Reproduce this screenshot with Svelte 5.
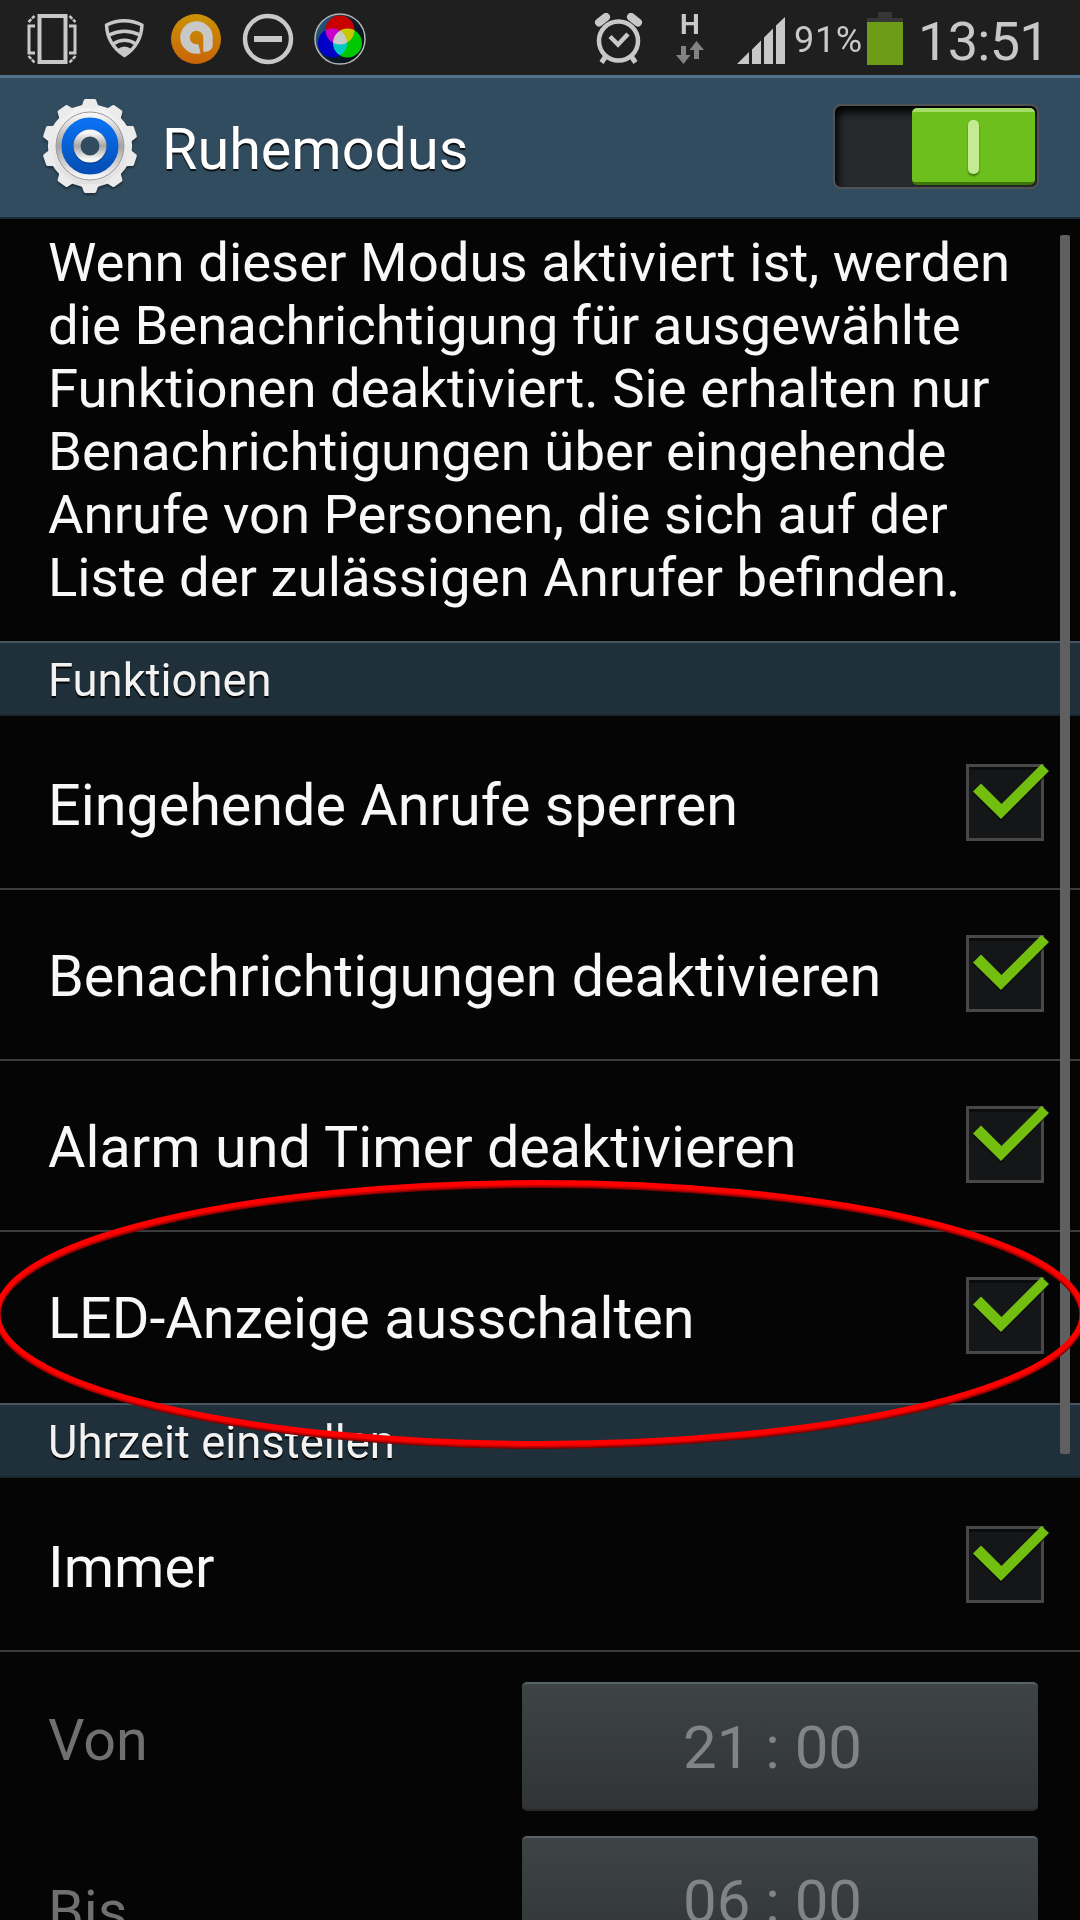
<script lang="ts">
    interface Option {
        label: string
        checked: boolean
    }

    let enabled = $state(true)

    let functions: Option[] = $state([
        { label: "Eingehende Anrufe sperren", checked: true },
        { label: "Benachrichtigungen deaktivieren", checked: true },
        { label: "Alarm und Timer deaktivieren", checked: true },
        { label: "LED-Anzeige ausschalten", checked: true },
    ])

    let schedule: Option[] = $state([{ label: "Immer", checked: true }])

    const times = [
        { label: "Von", value: "21 : 00" },
        { label: "Bis", value: "06 : 00" },
    ]

    const intro = [
        "Wenn dieser Modus aktiviert ist, werden",
        "die Benachrichtigung für ausgewählte",
        "Funktionen deaktiviert. Sie erhalten nur",
        "Benachrichtigungen über eingehende",
        "Anrufe von Personen, die sich auf der",
        "Liste der zulässigen Anrufer befinden.",
    ]

    const teeth = Array.from({ length: 10 }, (_, i) => i * 36)
</script>

{#snippet row(option: Option)}
    <button class="row" type="button" onclick={() => (option.checked = !option.checked)}>
        <span class="label">{option.label}</span>
        <svg class="check" width="84" height="82" viewBox="0 0 84 82">
            <rect x="1.5" y="1.5" width="75" height="74" fill="#141618" stroke="#484848" stroke-width="3" />
            <rect x="3" y="3" width="72" height="3" fill="#0b0c0d" />
            {#if option.checked}
                <path d="M7 27.5 L15 19.5 L35.5 40 L75.5 0 L83 7 L35 55 Z" fill="#050505" opacity=".6" transform="translate(0 2)" />
                <path d="M7 27.5 L15 19.5 L35.5 40 L75.5 0 L83 7 L35 55 Z" fill="#73bf10" />
            {/if}
        </svg>
    </button>
{/snippet}

<div class="phone">
    <div class="status">
        <div class="notifications">
            <svg width="52" height="52" viewBox="0 0 52 52" fill="none" stroke="#c8c8c8">
                <rect x="13.5" y="3" width="26" height="46" stroke-width="4" />
                <path d="M9 13 H3 V40 H9 M43 13 H49 V40 H43" stroke-width="3" />
                <path d="M2.5 9 L8.5 3 M43.5 3 L49.5 9 M2.5 43 L8.5 49.5 M43.5 49.5 L49.5 43" stroke-width="2.5" stroke-dasharray="4 1" />
            </svg>
            <svg width="52" height="52" viewBox="0 0 52 52" fill="none" stroke="#c8c8c8" stroke-width="3.5">
                <path d="M8.5 12 Q26 3.5 44 12 Q43 32 26.500 42.500 Q9.500 32 8.500 12 Z" stroke-linejoin="round" />
                <path d="M11 22 Q26.5 14.5 42 22 M15 31 Q26.5 23.5 38 31" />
                <path d="M20 37 Q26.5 32 33 37 L26.5 42 Z" fill="#c8c8c8" stroke-width="2" />
            </svg>
            <svg width="52" height="52" viewBox="0 0 52 52">
                <defs>
                    <linearGradient id="amber" x2="0" y2="1">
                        <stop offset="0" stop-color="#c99405" />
                        <stop offset="1" stop-color="#c96408" />
                    </linearGradient>
                </defs>
                <circle cx="26" cy="26" r="25" fill="url(#amber)" />
                <path d="M29.5 35.6 A11.5 11.5 0 1 1 38 24.5" fill="none" stroke="#c8c8c8" stroke-width="9.5" />
                <path d="M33.3 24 H42.7 V33 Q42 38.500 33.3 39 Z" fill="#c8c8c8" />
            </svg>
            <svg width="52" height="52" viewBox="0 0 52 52">
                <circle cx="26" cy="26" r="23" fill="none" stroke="#c8c8c8" stroke-width="4.500" />
                <rect x="12" y="23" width="28" height="6" fill="#c8c8c8" />
            </svg>
            <svg width="52" height="52" viewBox="0 0 52 52">
                <defs>
                    <linearGradient id="lens" x2="1" y2=".6">
                        <stop offset="0" stop-color="#2f6f9f" />
                        <stop offset=".6" stop-color="#0c1c2c" />
                        <stop offset="1" stop-color="#08101a" />
                    </linearGradient>
                </defs>
                <circle cx="26" cy="26" r="25" fill="url(#lens)" stroke="#b4b4b4" stroke-width="1.500" />
                <g class="rgb">
                    <circle cx="26" cy="17" r="14.5" fill="#c80000" />
                    <circle cx="18.5" cy="30" r="14.5" fill="#0000c8" />
                    <circle cx="33.5" cy="30" r="14.5" fill="#00c800" />
                </g>
            </svg>
        </div>

        <div class="system">
            <svg class="alarm" width="52" height="52" viewBox="0 0 52 52" fill="none" stroke="#c8c8c8">
                <circle cx="26.5" cy="28" r="19.5" stroke-width="4.5" />
                <path d="M18 23.5 L26 31.5 L36 21" stroke-width="4.5" />
                <path d="M14 43 L9.500 49.500 M39 43 L43.500 49.500" stroke-width="5" />
                <path d="M7 9.500 L14 4 M39 4 L46 9.500" stroke-width="8" stroke-linecap="round" />
            </svg>
            <div class="network">
                <span>H</span>
                <svg width="28" height="24" viewBox="0 0 28 24" fill="#828282">
                    <path d="M5 5 H10 V14 H14.5 L7.5 23 L0 14 H5 Z M20.5 0 L28 9 H23 V18 H18 V9 H13.5 Z" />
                </svg>
            </div>
            <svg class="signal" width="48" height="48" viewBox="0 0 48 48" fill="#c8c8c8">
                <path d="M0 47 L12 35 V47 Z M15 47 V32.5 L24 23.5 V47 Z M27 47 V20.5 L36 11.5 V47 Z M39 47 V8.5 L48 0 V47 Z" />
            </svg>
            <span class="percent">91%</span>
            <svg class="battery" width="36" height="53" viewBox="0 0 36 53">
                <path d="M11 0 H25 V6 H36 V12 H0 V6 H11 Z" fill="#373737" />
                <rect y="10" width="36" height="43" fill="#6d9c16" />
            </svg>
            <span class="clock">13:51</span>
        </div>
    </div>

    <header>
        <svg width="96" height="98" viewBox="-48 -48 96 98">
            <defs>
                <linearGradient id="steel" gradientUnits="userSpaceOnUse" x1="0" y1="-47" x2="0" y2="47">
                    <stop offset="0" stop-color="#f4f4f4" />
                    <stop offset="1" stop-color="#dedede" />
                </linearGradient>
                <linearGradient id="blue" x2="0" y2="1">
                    <stop offset="0" stop-color="#0a70f0" />
                    <stop offset="1" stop-color="#0450b8" />
                </linearGradient>
                <linearGradient id="rim" x2="0" y2="1">
                    <stop offset="0" stop-color="#f6f6f6" />
                    <stop offset=".5" stop-color="#a4a4a4" />
                    <stop offset="1" stop-color="#f6f6f6" />
                </linearGradient>
            </defs>
            <g class="gear" transform="scale(1.015 1)">
                <circle r="37" fill="none" stroke="url(#steel)" stroke-width="9" />
                {#each teeth as angle}
                    <path d="M-12 -38 Q-8 -39 -7.5 -42 L-6 -46 Q-5.5 -47 -4.5 -47 H4.5 Q5.5 -47 6 -46 L7.5 -42 Q8 -39 12 -38 Z" fill="#ebebeb" transform="rotate({angle})" />
                {/each}
            </g>
            <circle r="31" fill="none" stroke="url(#rim)" stroke-width="6" />
            <circle r="34" fill="none" stroke="#9a9a9a" stroke-width="1" />
            <circle r="22.500" fill="none" stroke="url(#blue)" stroke-width="12" />
            <circle cy="1.500" r="14.500" fill="none" stroke="#043a80" stroke-width="4" opacity=".6" />
            <circle r="13" fill="none" stroke="url(#rim)" stroke-width="7" />
        </svg>
        <h1>Ruhemodus</h1>
        <button class="switch" class:on={enabled} type="button" aria-label="Ruhemodus" onclick={() => (enabled = !enabled)}>
            <span class="thumb"><i></i></span>
        </button>
    </header>

    <main>
        <p>
            {#each intro as line}
                <span>{line}</span>
            {/each}
        </p>

        <h2>Funktionen</h2>
        <div class="rows">
            {#each functions as option}
                {@render row(option)}
            {/each}
        </div>

        <h2>Uhrzeit einstellen</h2>
        <div class="rows always">
            {#each schedule as option}
                {@render row(option)}
            {/each}
        </div>

        <div class="times">
            {#each times as time}
                <div class="time">
                    <span>{time.label}</span>
                    <button type="button" disabled>{time.value}</button>
                </div>
            {/each}
        </div>
    </main>

    <div class="scrollbar"></div>

    <!-- marker round the LED option -->
    <svg class="marker" width="1080" height="280" viewBox="0 1174 1080 280" fill="none">
        <ellipse cx="540" cy="1315.5" rx="542.5" ry="130.5" stroke="#7c0000" stroke-width="6" />
        <ellipse cx="540" cy="1314.3" rx="542.5" ry="130.5" stroke="#c00000" stroke-width="6" />
        <ellipse cx="540" cy="1313" rx="542.5" ry="130.5" stroke="#ff0000" stroke-width="5" />
    </svg>
</div>

<style>
    :global(body) {
        margin: 0;
        background-color: #050505;
    }

    .phone, .phone * {
        box-sizing: border-box;
    }

    .phone {
        position: relative;
        width: 1080px;
        height: 1920px;
        overflow: hidden;
        background-color: #050505;
        color: #f8f8f8;
        font-family: Roboto, "Liberation Sans", sans-serif;
        font-size: 57.5px;
    }

    svg {
        display: block;
        flex: none;
    }

    button {
        margin: 0;
        padding: 0;
        border: 0;
        background: none;
        color: inherit;
        font: inherit;
    }

    .status {
        display: flex;
        justify-content: space-between;
        height: 75px;
        padding: 0 36px 0 26px;
        background-color: #1f1f1f;
        color: #c8c8c8;
    }

    .notifications {
        display: flex;
        gap: 20px;
        padding-top: 13px;
    }

    .rgb {
        isolation: isolate;

        & circle {
            mix-blend-mode: screen;
        }
    }

    .system {
        display: flex;
        width: 452px;
        height: 75px;
        white-space: nowrap;
    }

    .alarm {
        margin-top: 13px;
    }

    .network {
        flex: none;
        width: 28px;
        margin: 13px 0 0 32px;
        text-align: center;

        & span {
            display: block;
            height: 28px;
            font-size: 28px;
            font-weight: 700;
            line-height: 24px;
        }
    }

    .signal {
        margin: 17px 0 0 33px;
    }

    .percent {
        flex: none;
        width: 71px;
        margin-left: 9px;
        font-size: 36px;
        letter-spacing: 0.7px;
        line-height: 80px;
    }

    .battery {
        margin: 12px 0 0 2px;
    }

    .clock {
        flex: none;
        margin-left: 15px;
        font-size: 54px;
        letter-spacing: -0.7px;
        line-height: 84px;
    }

    header {
        display: flex;
        align-items: flex-start;
        height: 144px;
        padding: 0 42px;
        border-top: 3px solid #51718a;
        border-bottom: 2px solid #1b2c38;
        background-color: #314c5f;

        & svg {
            margin-top: 20px;
        }
    }

    .gear {
        filter: drop-shadow(0 2px 1px #0006);
    }

    h1 {
        flex: 1;
        margin: 0 0 0 24px;
        color: #fff;
        font-size: 57.5px;
        font-weight: 400;
        line-height: 143px;
        text-shadow: 0 2px 1px #000c;
    }

    .switch {
        display: flex;
        width: 206px;
        height: 85px;
        margin: 26px -1px 0 0;
        padding: 2px;
        border: 2px solid #505355;
        border-radius: 8px;
        background-color: #272a2d;
        box-shadow: inset 3px 6px 8px #000;

        &.on {
            justify-content: flex-end;
        }
    }

    .thumb {
        display: flex;
        align-items: center;
        justify-content: center;
        width: 123px;
        height: 77px;
        border-top: 4px solid #a4de68;
        border-bottom: 3px solid #3d7508;
        border-radius: 5px;
        background-color: #6cbf1c;

        & i {
            width: 11px;
            height: 54px;
            border-radius: 5px;
            background-color: #c4eb92;
            box-shadow: 0 2px 2px #3a7408;
        }
    }

    p {
        height: 422px;
        margin: 0;
        padding: 12px 0 0 48px;
        font-size: 54.5px;
        white-space: nowrap;

        & span {
            display: block;
            line-height: 63px;
        }
    }

    h2 {
        height: 75px;
        margin: 0;
        padding-left: 48px;
        border-top: 2px solid #47555f;
        border-bottom: 2px solid #1a262e;
        background-color: #20303b;
        color: #f2f2f2;
        font-size: 45.4px;
        font-weight: 400;
        line-height: 75px;
        text-shadow: 0 2px 1px #000;
    }

    .rows {
        padding-top: 3px;
    }

    .row {
        display: flex;
        justify-content: space-between;
        width: 100%;
        height: 171px;
        padding: 45px 30px 0 48px;
        border-bottom: 2px solid #3c3c3c;
        text-align: left;
        white-space: nowrap;

        &:last-child {
            border-bottom: 0;
        }

        .always &:last-child {
            border-bottom: 2px solid #3c3c3c;
        }
    }

    .label {
        line-height: 83px;
    }

    .times {
        display: flex;
        flex-direction: column;
        gap: 25px;
        padding: 30px 42px 0 48px;
        color: #707070;
    }

    .time {
        display: flex;
        justify-content: space-between;

        & span {
            line-height: 117px;
        }

        & + .time span {
            margin-top: 17px;
        }

        & button {
            width: 516px;
            height: 129px;
            padding: 2px 15px 0 0;
            border-top: 2px solid #596468;
            border-bottom: 2px solid #24282a;
            border-radius: 5px;
            background: linear-gradient(#3e4346, #303436);
            color: #818384;
            font-size: 60px;
        }
    }

    .scrollbar {
        position: absolute;
        top: 235px;
        right: 10px;
        width: 10px;
        height: 1219px;
        border-radius: 2px;
        background-color: #5f5f5f;
    }

    .marker {
        position: absolute;
        top: 1174px;
        left: 0;
        pointer-events: none;
    }
</style>
